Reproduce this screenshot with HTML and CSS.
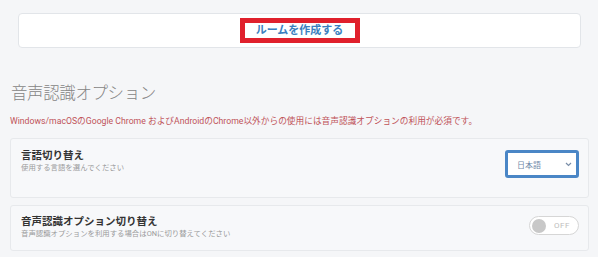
FILE: index.html
```html
<!DOCTYPE html>
<html lang="ja">
<head>
  <meta charset="UTF-8" />
  <meta name="viewport" content="width=device-width, initial-scale=1" />
  <title>ルーム作成</title>
  <link rel="stylesheet" href="styles.css">
</head>
<body>
  <div class="create-card">
    <button class="create-btn">ルームを作成する</button>
  </div>

  <h2 class="section-title">音声認識オプション</h2>
  <p class="notice">Windows/macOSのGoogle Chrome およびAndroidのChrome以外からの使用には音声認識オプションの利用が必須です。</p>

  <div class="option-card lang-card">
    <div class="option-text">
      <div class="option-title">言語切り替え</div>
      <div class="option-desc">使用する言語を選んでください</div>
    </div>
    <div class="lang-select">
      <span>日本語</span>
      <svg class="chevron" width="7" height="5" viewBox="0 0 7 5"><path d="M1 1l2.5 2.5L6 1" fill="none" stroke="#7a8ea8" stroke-width="1.2"/></svg>
    </div>
  </div>

  <div class="option-card voice-card">
    <div class="option-text">
      <div class="option-title">音声認識オプション切り替え</div>
      <div class="option-desc">音声認識オプションを利用する場合はONに切り替えてください</div>
    </div>
    <div class="toggle">
      <span class="knob"></span>
      <span class="toggle-label">OFF</span>
    </div>
  </div>
</body>
</html>
```

FILE: styles.css
```css
body {
  font-family: Roboto, "Noto Sans CJK JP", sans-serif;
  background-color: #f5f6f8;
  margin: 0;
  padding: 13px 9px 0 10px;
  color: #333;
}
.create-card {
  margin: 0 8px;
  height: 35px;
  box-sizing: border-box;
  background: #fff;
  border: 1px solid #e2e5e9;
  border-radius: 4px;
  display: flex;
  align-items: center;
  justify-content: center;
}
.create-btn {
  width: 120px;
  height: 25px;
  box-sizing: border-box;
  border: 5px solid #e0202c;
  background: #fff;
  color: #3a7fbf;
  font-family: inherit;
  font-size: 11px;
  font-weight: bold;
  padding: 0;
  line-height: 15px;
}
.section-title {
  margin: 36px 0 0 1px;
  font-size: 16.5px;
  font-weight: 300;
  line-height: 20px;
  color: #858585;
  letter-spacing: -0.4px;
}
.notice {
  margin: 11px 0 0;
  font-size: 8.7px;
  line-height: 12px;
  color: #c05358;
}
.option-card {
  display: flex;
  justify-content: space-between;
  align-items: flex-start;
  box-sizing: border-box;
  background: #f7f8fa;
  border: 1px solid #e7e9ec;
  border-radius: 3px;
  padding: 10px 9px 0 10px;
}
.lang-card {
  margin-top: 11px;
  height: 60px;
}
.voice-card {
  margin-top: 7px;
  height: 46px;
  padding-top: 9px;
}
.option-title {
  font-size: 10.5px;
  font-weight: bold;
  line-height: 14px;
  color: #333;
}
.option-desc {
  font-size: 7.4px;
  line-height: 10px;
  color: #9a9a9a;
}
.lang-select {
  margin-top: 1px;
  width: 74px;
  height: 28px;
  box-sizing: border-box;
  border: 3px solid #4a86c6;
  border-radius: 3px;
  background: #fff;
  display: flex;
  align-items: center;
  justify-content: space-between;
  padding: 0 4px 0 9px;
  font-size: 8px;
  color: #6f88a8;
}
.toggle {
  margin-top: 1px;
  width: 50px;
  height: 19px;
  box-sizing: border-box;
  border: 1px solid #d6d6d6;
  border-radius: 10px;
  background: #fff;
  display: flex;
  align-items: center;
  padding: 0 2px;
  gap: 8px;
}
.knob {
  width: 14px;
  height: 14px;
  border-radius: 50%;
  background: #c8c8c8;
}
.toggle-label {
  font-size: 8px;
  color: #bdbdbd;
  letter-spacing: 0.5px;
}
```
